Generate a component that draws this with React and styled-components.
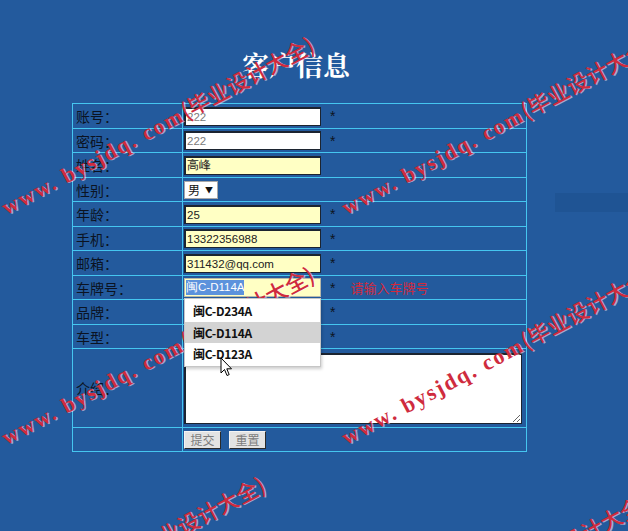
import React from "react";
import styled, { createGlobalStyle } from "styled-components";

const GlobalStyle = createGlobalStyle`
  html, body {
    margin: 0;
    padding: 0;
    background: #235a9d;
  }
  body {
    font-family: "Noto Sans CJK SC", "Liberation Sans", sans-serif;
  }
`;

const rows = [
  { label: "账号：", value: "222", muted: true, white: true, star: true },
  { label: "密码：", value: "222", muted: true, white: true, star: true },
  { label: "姓名：", value: "高峰" },
  { label: "性别：", select: "男" },
  { label: "年龄：", value: "25", star: true },
  { label: "手机：", value: "13322356988", star: true },
  { label: "邮箱：", value: "311432@qq.com", star: true },
  { label: "车牌号：", plate: "闽C-D114A", star: true, error: "请输入车牌号" },
  { label: "品牌：", value: "", star: true },
  { label: "车型：", value: "", star: true },
];

const suggestions = ["闽C-D234A", "闽C-D114A", "闽C-D123A"];

const marks = [
  { x: 8, y: 218 },
  { x: 348, y: 218 },
  { x: 8, y: 448 },
  { x: 348, y: 448 },
  { x: -41, y: 658 },
  { x: 343, y: 675 },
];

const Cursor = () => (
  <CursorSvg width="13" height="20" viewBox="0 0 13 20">
    <path
      d="M1 1 L1 16 L4.5 12.5 L7 18.5 L9.2 17.6 L6.8 11.8 L11.5 11.8 Z"
      fill="#fff"
      stroke="#000"
      strokeWidth="1"
      strokeLinejoin="round"
    />
  </CursorSvg>
);

const App = () => {
  return (
    <Page>
      <GlobalStyle />
      <Shade />
      <Content>
        <Title>客户信息</Title>
        <Table>
          {rows.map((r, idx) => (
            <Row key={idx}>
              <Label>{r.label}</Label>
              <Value>
                {r.select && (
                  <FakeSelect>
                    {r.select}
                    <Arrow>▼</Arrow>
                  </FakeSelect>
                )}
                {r.plate && (
                  <PlateWrap>
                    <PlateField>
                      <Selected>{r.plate}</Selected>
                    </PlateField>
                    <Dropdown>
                      {suggestions.map((s, i) => (
                        <Option key={s} $active={i === 1}>
                          {s}
                        </Option>
                      ))}
                      <Cursor />
                    </Dropdown>
                  </PlateWrap>
                )}
                {!r.select && !r.plate && (
                  <Field
                    readOnly
                    value={r.value}
                    $white={r.white}
                    $muted={r.muted}
                  />
                )}
                {r.star && <Star>*</Star>}
                {r.error && <ErrorText>{r.error}</ErrorText>}
              </Value>
            </Row>
          ))}
          <Row $tall>
            <Label>介绍：</Label>
            <Value>
              <Area readOnly value="" />
            </Value>
          </Row>
          <Row>
            <Label />
            <Value>
              <Buttons>
                <Button>提交</Button>
                <Button>重置</Button>
              </Buttons>
            </Value>
          </Row>
        </Table>
      </Content>
      {marks.map((m, i) => (
        <Watermark key={i} style={{ left: m.x, top: m.y - 26 }}>
          www. bysjdq. com<Cn>(毕业设计大全)</Cn>
        </Watermark>
      ))}
    </Page>
  );
};

export default App;

const Page = styled.div`
  position: relative;
  width: 100%;
  height: 531px;
  overflow: hidden;
  background: #235a9d;
`;

const Shade = styled.div`
  position: absolute;
  left: 555px;
  top: 193px;
  width: 80px;
  height: 19px;
  background: rgba(10, 40, 90, 0.12);
`;

const Content = styled.div`
  padding: 50px 0 0 72px;
`;

const Title = styled.div`
  width: 448px;
  text-align: center;
  height: 30px;
  line-height: 30px;
  margin-bottom: 23px;
  font-family: "Noto Serif CJK SC", "Noto Sans CJK SC", serif;
  font-size: 27px;
  font-weight: 700;
  color: #ffffff;
`;

const Table = styled.div`
  box-sizing: border-box;
  width: 455px;
  border: 1px solid #45c6f0;
`;

const Row = styled.div`
  display: grid;
  grid-template-columns: 110px 1fr;
  height: ${({ $tall }) => ($tall ? "78px" : "24px")};
  & + & {
    border-top: 1px solid #45c6f0;
  }
  &:nth-child(even) {
    height: ${({ $tall }) => ($tall ? "78px" : "23px")};
  }
`;

const Label = styled.div`
  display: flex;
  align-items: center;
  padding-left: 3px;
  border-right: 1px solid #45c6f0;
  font-size: 14px;
  color: #0b1322;
`;

const Value = styled.div`
  position: relative;
  display: flex;
  align-items: center;
  padding-left: 1px;
`;

const Field = styled.input`
  box-sizing: border-box;
  width: 137px;
  height: 19px;
  margin: 0;
  padding: 0 1px;
  border: 2px solid #1c2430;
  border-right-width: 1px;
  border-bottom-width: 1px;
  background: ${({ $white }) => ($white ? "#ffffff" : "#ffffc4")};
  color: ${({ $muted }) => ($muted ? "#7a7a7a" : "#222")};
  font-family: "Liberation Sans", Arial, sans-serif;
  font-size: 11.5px;
  outline: none;
`;

const PlateWrap = styled.div`
  position: relative;
`;

const PlateField = styled.div`
  box-sizing: border-box;
  width: 137px;
  height: 19px;
  padding: 0 1px;
  display: flex;
  align-items: center;
  border: 1px solid #b8b8a8;
  background: #ffffc4;
  font-family: "Liberation Sans", Arial, sans-serif;
  font-size: 11.5px;
`;

const Selected = styled.span`
  background: #5c92dc;
  color: #ffffff;
  line-height: 15px;
`;

const Dropdown = styled.div`
  position: absolute;
  left: 0;
  top: 20px;
  z-index: 2;
  box-sizing: border-box;
  width: 137px;
  padding: 1px 0;
  background: #ffffff;
  border: 1px solid #c6c6c6;
  box-shadow: 1px 2px 3px rgba(0, 0, 0, 0.2);
`;

const Option = styled.div`
  height: 21.5px;
  line-height: 21.5px;
  padding-left: 8px;
  background: ${({ $active }) => ($active ? "#d3d3d3" : "#ffffff")};
  font-size: 12px;
  font-weight: 700;
  color: #111;
  letter-spacing: -0.3px;
`;

const CursorSvg = styled.svg`
  position: absolute;
  left: 35px;
  top: 58px;
`;

const FakeSelect = styled.div`
  box-sizing: border-box;
  width: 34px;
  height: 18px;
  display: flex;
  align-items: center;
  gap: 5px;
  padding-left: 3px;
  background: #ffffff;
  border: 1px solid #a8a8a8;
  font-size: 12px;
  color: #111;
`;

const Arrow = styled.span`
  font-size: 8px;
`;

const Star = styled.span`
  margin-left: 9px;
  font-family: "Liberation Sans", Arial, sans-serif;
  font-size: 14px;
  color: #0d1420;
`;

const ErrorText = styled.span`
  margin-left: 15px;
  font-size: 13px;
  color: #d22a3c;
`;

const Area = styled.textarea`
  box-sizing: border-box;
  width: 338px;
  height: 71px;
  margin: 0;
  padding: 1px;
  border: 2px solid #1c2430;
  border-right-width: 1px;
  border-bottom-width: 1px;
  background: #ffffff;
  resize: both;
  outline: none;
`;

const Buttons = styled.div`
  display: flex;
  gap: 8px;
`;

const Button = styled.button`
  box-sizing: border-box;
  width: 37px;
  height: 18px;
  padding: 0;
  border: 1px solid #2a2a2a;
  border-top-color: #f4f4f4;
  border-left-color: #f4f4f4;
  background: #e3e3e3;
  color: #7c7c7c;
  font-family: "Noto Sans CJK SC", sans-serif;
  font-size: 12px;
  line-height: 16px;
`;

const Watermark = styled.div`
  position: absolute;
  white-space: nowrap;
  height: 26px;
  line-height: 26px;
  transform-origin: 0 100%;
  transform: rotate(-28deg);
  font-family: "Liberation Serif", serif;
  font-size: 22px;
  font-weight: 700;
  letter-spacing: 2px;
  color: #cf2b3e;
  text-shadow: 1px 1px 0 rgba(255, 255, 255, 0.55);
  pointer-events: none;
`;

const Cn = styled.span`
  font-family: "Noto Sans CJK SC", sans-serif;
  font-weight: 500;
  letter-spacing: 0;
`;
